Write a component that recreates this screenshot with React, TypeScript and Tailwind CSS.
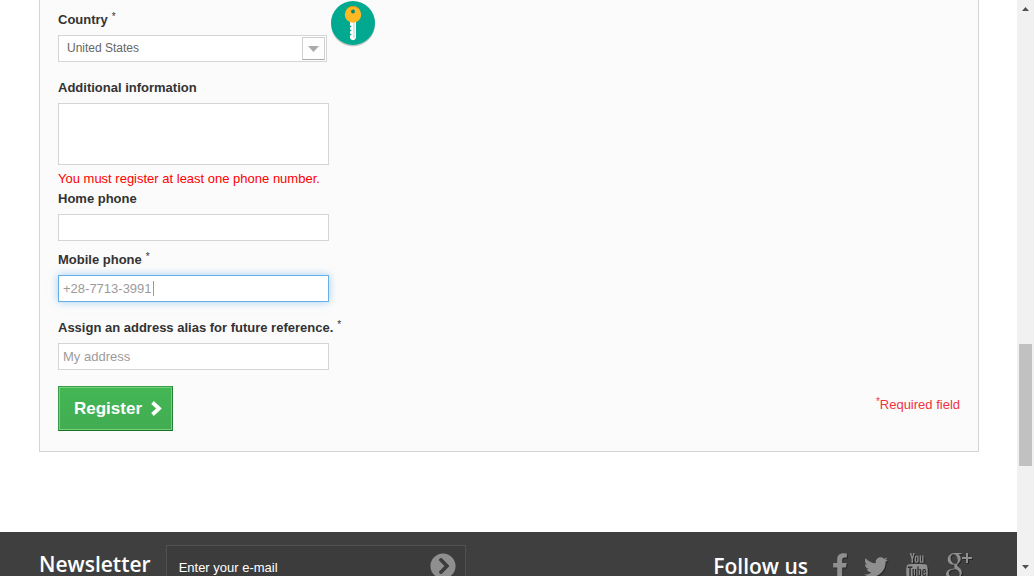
import type { ReactNode } from "react";
import { FaChevronRight, FaFacebookF, FaTwitter, FaChevronCircleRight } from "react-icons/fa";
import { TfiYoutube, TfiGoogle } from "react-icons/tfi";

const box =
  "block w-[271px] border border-[#d6d4d4] bg-white px-1 text-[13px] leading-[18px] text-[#9c9b9b] outline-none";

function Field({ id, label, required, children }: { id: string; label: string; required?: boolean; children: ReactNode }) {
  return (
    <div className="flex flex-col items-start gap-[6px]">
      <label htmlFor={id} className="text-[13px] leading-[18px] font-bold text-[#333]">
        {label}
        {required && <sup className="-top-1 ml-1 text-[10px] leading-none font-normal text-[#333]">*</sup>}
      </label>
      {children}
    </div>
  );
}

function KeyBadge() {
  return (
    <svg viewBox="0 0 48 48" className="absolute -top-[11px] left-[271px] size-12" aria-hidden="true">
      <circle cx="24" cy="25.5" r="22" fill="#000" opacity=".2" />
      <circle cx="24" cy="24" r="22" fill="#00a98f" />
      <path d="M21 21h6v17.500l-1 2-2 .8-2-.8-1-1.500v-2.500l1.800-1-1.800-1v-2l1.800-1-1.800-1v-2l1.800-1-1.800-1z" fill="#fff" />
      <path d="M25 23v16" stroke="#b5cfca" strokeWidth="1" />
      <circle cx="24" cy="15.500" r="8.200" fill="#fdb924" />
      <path d="M16.500 12a8.200 8.200 0 0 1 15 0 9 9 0 0 0-15 0z" fill="#d99a16" />
      <circle cx="24" cy="12.500" r="2" fill="#008773" />
    </svg>
  );
}

export default function App() {
  return (
    <div className="flex h-screen overflow-hidden bg-white font-['Liberation_Sans',Arial,sans-serif] text-[13px] leading-[18px]">
      <div className="flex min-w-0 flex-1 flex-col">
        <main className="pr-[38px] pb-20 pl-[39px]">
          <form className="border border-t-0 border-[#d6d4d4] bg-[#fbfbfb] px-[18px] pt-[11px] pb-5">
            <div className="flex flex-col gap-[17px]">
              <Field id="country" label="Country" required>
                <div className="relative w-[269px]">
                  <select
                    id="country"
                    className="block h-[27px] w-full appearance-none border border-[#d6d4d4] bg-white pr-7 pb-[2px] pl-2 text-[12px] text-[#666] outline-none"
                  >
                    <option>United States</option>
                  </select>
                  <span className="pointer-events-none absolute top-[2px] right-[2px] flex h-[23px] w-[23px] items-center justify-center border border-[#d0d0d0] border-b-[#aaa] bg-[#fdfdfd]">
                    <svg viewBox="0 0 11 6" className="h-[6px] w-[11px]">
                      <path d="M0 0h11L5.500 6z" fill="#aaa" />
                    </svg>
                  </span>
                  <div className="absolute top-[-25px] left-0">
                    <KeyBadge />
                  </div>
                </div>
              </Field>
              <div>
                <Field id="info" label="Additional information">
                  <textarea id="info" className={`${box} h-[62px] resize-none`} />
                </Field>
                <p className="mt-[5px] mb-[2px] text-[#f00]">You must register at least one phone number.</p>
                <Field id="home" label="Home phone">
                  <input id="home" type="tel" className={`${box} h-[27px]`} />
                </Field>
                <div className="mt-[10px]">
                  <Field id="mobile" label="Mobile phone" required>
                    <div className="relative">
                      <input
                        id="mobile"
                        type="tel"
                        defaultValue="+28-7713-3991"
                        className="block h-[27px] w-[271px] border border-[#66afe9] bg-white px-1 text-[13px] text-[#9c9b9b] caret-transparent shadow-[0_0_8px_rgba(102,175,233,0.6)] outline-none"
                      />
                      <span className="absolute top-[6px] left-[95px] h-[15px] w-px bg-[#999]" />
                    </div>
                  </Field>
                </div>
              </div>
              <Field id="alias" label="Assign an address alias for future reference." required>
                <input id="alias" type="text" defaultValue="My address" className={`${box} h-[27px]`} />
              </Field>
            </div>
            <div className="mt-4 flex items-start justify-between">
              <button
                type="button"
                className="flex h-[45px] items-center gap-2 border border-t-[#399a49] border-r-[#247f32] border-b-[#1a6d27] border-l-[#399a49] bg-linear-to-b from-[#43b754] to-[#42ac52] pr-[9px] pl-[15px] text-[17px] leading-[21px] font-bold text-white inset-ring inset-ring-[#74d578]"
              >
                Register
                <svg viewBox="0 0 13 17" className="h-[17px] w-[13px]" aria-hidden="true">
                  <path d="M2.500 2.500 9 8.500 2.500 14.500" fill="none" stroke="#fff" strokeWidth="3.800" />
                </svg>
              </button>
              <p className="mt-[10px] text-[#f13340]">
                <sup className="-top-1 text-[10px] leading-none">*</sup>Required field
              </p>
            </div>
          </form>
        </main>
        <footer className="flex flex-1 items-start justify-between bg-[#3f3f3f] pr-[45px] pl-[39px]">
          <form className="flex items-start gap-[15px] pt-[13px]">
            <label htmlFor="newsletter" className="pt-[7px] font-['Open_Sans',sans-serif] text-[21px] leading-[25px] font-semibold text-white">
              Newsletter
            </label>
            <div className="relative">
              <input
                id="newsletter"
                type="text"
                defaultValue="Enter your e-mail"
                className="block h-[45px] w-[300px] border border-[#515151] bg-[#3c3c3c] pr-11 pl-3 text-[13px] text-white outline-none"
              />
              <button type="button" aria-label="Subscribe" className="absolute top-2 right-[10px] text-[#908f8f]">
                <FaChevronCircleRight className="size-[26px]" />
              </button>
            </div>
          </form>
          <section className="flex items-start gap-6 pt-[21px]">
            <h4 className="pt-px font-['Open_Sans',sans-serif] text-[21px] leading-[25px] font-semibold text-white">Follow us</h4>
            <nav className="flex items-start gap-4 text-[#908f8f] drop-shadow-[1px_1px_0_rgba(0,0,0,0.4)]">
              <a href="#facebook" aria-label="Facebook"><FaFacebookF className="h-[26px] w-4" /></a>
              <a href="#twitter" aria-label="Twitter" className="pt-[2px]"><FaTwitter className="size-6" /></a>
              <a href="#youtube" aria-label="YouTube"><TfiYoutube className="size-[26px]" /></a>
              <a href="#google" aria-label="Google Plus"><TfiGoogle className="size-[26px]" /></a>
            </nav>
          </section>
        </footer>
      </div>
      <div className="flex w-[17px] flex-col items-center bg-[#f1f1f1]" aria-hidden="true">
        <svg viewBox="0 0 17 17" className="size-[17px]"><path d="M5 11h7L8.500 7z" fill="#505050" /></svg>
        <div className="flex w-[13px] flex-1 flex-col">
          <div className="flex-[327]" />
          <div className="flex-[122] bg-[#c1c1c1]" />
          <div className="flex-[93]" />
        </div>
        <svg viewBox="0 0 17 17" className="size-[17px]"><path d="M5 6h7l-3.500 4z" fill="#505050" /></svg>
      </div>
    </div>
  );
}
